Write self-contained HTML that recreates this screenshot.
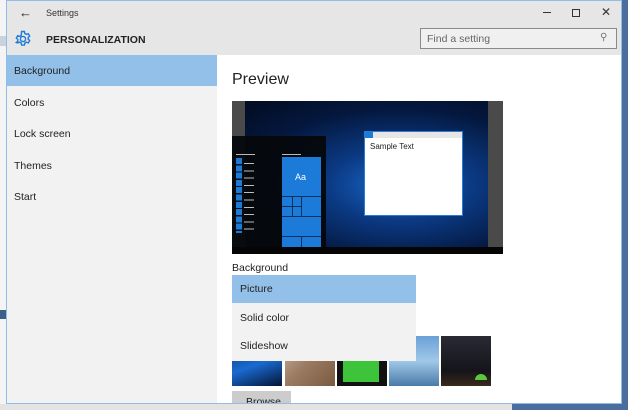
<!DOCTYPE html>
<html><head><meta charset="utf-8"><style>
*{margin:0;padding:0;box-sizing:border-box}
body{width:628px;height:410px;overflow:hidden;background:#e8e8e8;font-family:"Liberation Sans",sans-serif;position:relative;font-size:11px;color:#222}
.abs{position:absolute}
</style></head><body>
<div class="abs" style="left:0;top:0;width:7px;height:410px;background:#f4f4f4"></div>
<div class="abs" style="left:0;top:36px;width:7px;height:10px;background:#c9d3df"></div>
<div class="abs" style="left:0;top:310px;width:7px;height:9px;background:#3e5f8e"></div>
<div class="abs" style="left:621px;top:0;width:7px;height:410px;background:#4c6e9f"></div>
<div class="abs" style="left:0;top:404px;width:628px;height:6px;background:#e3e3e3"></div>
<div class="abs" style="left:512px;top:404px;width:116px;height:6px;background:#4c6e9f"></div>
<!-- window -->
<div class="abs" style="left:6px;top:0;width:616px;height:404px;border:1px solid #8fbde6;background:#fff;overflow:hidden">
  <div class="abs" style="left:0;top:0;width:614px;height:54px;background:#e6e6e6"></div>
  <div class="abs" style="left:12px;top:4px;font-size:13px;color:#222">&#8592;</div>
  <div class="abs" style="left:39px;top:7px;font-size:9px;color:#333">Settings</div>
  <div class="abs" style="left:536px;top:11px;width:8px;height:1px;background:#333"></div>
  <div class="abs" style="left:565px;top:8px;width:8px;height:8px;border:1px solid #333"></div>
  <div class="abs" style="left:594px;top:4px;font-size:12px;color:#333">✕</div>
  <svg class="abs" style="left:7px;top:29px" width="18" height="18" viewBox="0 0 18 18"><g fill="none" stroke="#1f7cd6" stroke-width="1.4"><circle cx="9" cy="9" r="2.6"/><path d="M7.6 1.5h2.8l.4 2 1.6.9 1.9-.7 1.4 2.4-1.5 1.3v1.8l1.5 1.3-1.4 2.4-1.9-.7-1.6.9-.4 2H7.6l-.4-2-1.6-.9-1.9.7L2.3 12.5l1.5-1.3V9.4L2.3 8.1l1.4-2.4 1.9.7 1.6-.9z"/></g></svg>
  <div class="abs" style="left:39px;top:33px;font-size:10.5px;font-weight:bold;color:#222">PERSONALIZATION</div>
  <div class="abs" style="left:413px;top:27px;width:197px;height:21px;border:1px solid #8a8a8a;background:#f0f0f0"></div>
  <div class="abs" style="left:420px;top:32px;font-size:10.5px;color:#666">Find a setting</div>
  <div class="abs" style="left:593px;top:31px;font-size:10px;color:#777">&#9906;</div>
  <!-- sidebar -->
  <div class="abs" style="left:0;top:54px;width:210px;height:350px;background:#f2f2f2"></div>
  <div class="abs" style="left:0;top:54px;width:210px;height:31px;background:#92c0e8"></div>
  <div class="abs" style="left:7px;top:64px;font-size:10.5px">Background</div>
  <div class="abs" style="left:7px;top:96px;font-size:10.5px">Colors</div>
  <div class="abs" style="left:7px;top:127px;font-size:10.5px">Lock screen</div>
  <div class="abs" style="left:7px;top:159px;font-size:10.5px">Themes</div>
  <div class="abs" style="left:7px;top:190px;font-size:10.5px">Start</div>
  <!-- content -->
  <div class="abs" style="left:225px;top:70px;font-size:16px;color:#222">Preview</div>
  <div class="abs" style="left:225px;top:100px;width:271px;height:153px;background:radial-gradient(ellipse at 62% 55%,#1a6bd0 0%,#0b3a84 30%,#04173d 65%,#020b1e 100%);overflow:hidden">
    <div class="abs" style="left:0;top:0;width:13px;height:146px;background:#4a4a4a"></div>
    <div class="abs" style="left:256px;top:0;width:15px;height:146px;background:#4a4a4a"></div>
    <div class="abs" style="left:0;top:146px;width:271px;height:7px;background:#050505"></div>
    <div class="abs" style="left:0;top:35px;width:94px;height:111px;background:rgba(5,8,12,.95)"></div>
    <div class="abs" style="left:4px;top:53px;width:19px;height:1px;background:#bbb"></div>
    <div class="abs" style="left:4px;top:57px;width:6px;height:75px;background:repeating-linear-gradient(#1c7ad8 0 6px,transparent 6px 7.3px)"></div>
    <div class="abs" style="left:12px;top:59px;width:10px;height:70px;background:repeating-linear-gradient(transparent 0 3px,#bbb 3px 4px,transparent 4px 7.3px)"></div>
    <div class="abs" style="left:50px;top:53px;width:19px;height:1px;background:#bbb"></div>
    <div class="abs" style="left:50px;top:56px;width:39px;height:90px;background:#1c7ad8"></div>
    <div class="abs" style="left:50px;top:95px;width:39px;height:1px;background:#0b3060"></div>
    <div class="abs" style="left:50px;top:115px;width:39px;height:1px;background:#0b3060"></div>
    <div class="abs" style="left:50px;top:105px;width:19px;height:1px;background:#0b3060"></div>
    <div class="abs" style="left:60px;top:95px;width:1px;height:20px;background:#0b3060"></div>
    <div class="abs" style="left:69px;top:95px;width:1px;height:20px;background:#0b3060"></div>
    <div class="abs" style="left:50px;top:135px;width:39px;height:1px;background:#0b3060"></div>
    <div class="abs" style="left:69px;top:135px;width:1px;height:11px;background:#0b3060"></div>
    <div class="abs" style="left:63px;top:71px;font-size:9px;color:#fff">Aa</div>
    <div class="abs" style="left:132px;top:30px;width:99px;height:85px;background:#fff;border:1px solid #2a7ad8"></div>
    <div class="abs" style="left:133px;top:31px;width:97px;height:6px;background:#e6e6e6"></div>
    <div class="abs" style="left:133px;top:31px;width:8px;height:6px;background:#1c7ad8"></div>
    <div class="abs" style="left:138px;top:41px;font-size:8px;color:#222">Sample Text</div>
  </div>
  <div class="abs" style="left:225px;top:261px;font-size:10.5px">Background</div>
  <!-- thumbnails -->
  <div class="abs" style="left:225px;top:335px;width:50px;height:50px;background:linear-gradient(160deg,#0a2a5a,#1a6ad0 55%,#041433)"></div>
  <div class="abs" style="left:278px;top:335px;width:50px;height:50px;background:linear-gradient(135deg,#c8b8a8,#9a7a60 50%,#7a5a40)"></div>
  <div class="abs" style="left:330px;top:335px;width:50px;height:50px;background:#111"><div class="abs" style="left:6px;top:4px;width:36px;height:42px;background:#3ec43a"></div><div class="abs" style="left:16px;top:0;width:16px;height:18px;background:#b08a6a;border-radius:40%"></div></div>
  <div class="abs" style="left:382px;top:335px;width:50px;height:50px;background:linear-gradient(#6aa0d8,#a0c8e8 50%,#4a7aa8)"></div>
  <div class="abs" style="left:434px;top:335px;width:50px;height:50px;background:linear-gradient(#2a2a34,#14141a 70%,#3a2a1a)"><div class="abs" style="left:34px;top:38px;width:12px;height:6px;background:#5ac83a;border-radius:6px 6px 0 0"></div></div>
  <!-- dropdown -->
  <div class="abs" style="left:225px;top:274px;width:184px;height:86px;background:#f2f2f2"></div>
  <div class="abs" style="left:225px;top:274px;width:184px;height:28px;background:#92c0e8"></div>
  <div class="abs" style="left:233px;top:282px;font-size:10.5px">Picture</div>
  <div class="abs" style="left:233px;top:311px;font-size:10.5px">Solid color</div>
  <div class="abs" style="left:233px;top:339px;font-size:10.5px">Slideshow</div>
  <div class="abs" style="left:225px;top:390px;width:59px;height:20px;background:#ccc"></div>
  <div class="abs" style="left:239px;top:395px;font-size:10.5px">Browse</div>
</div>
</body></html>
